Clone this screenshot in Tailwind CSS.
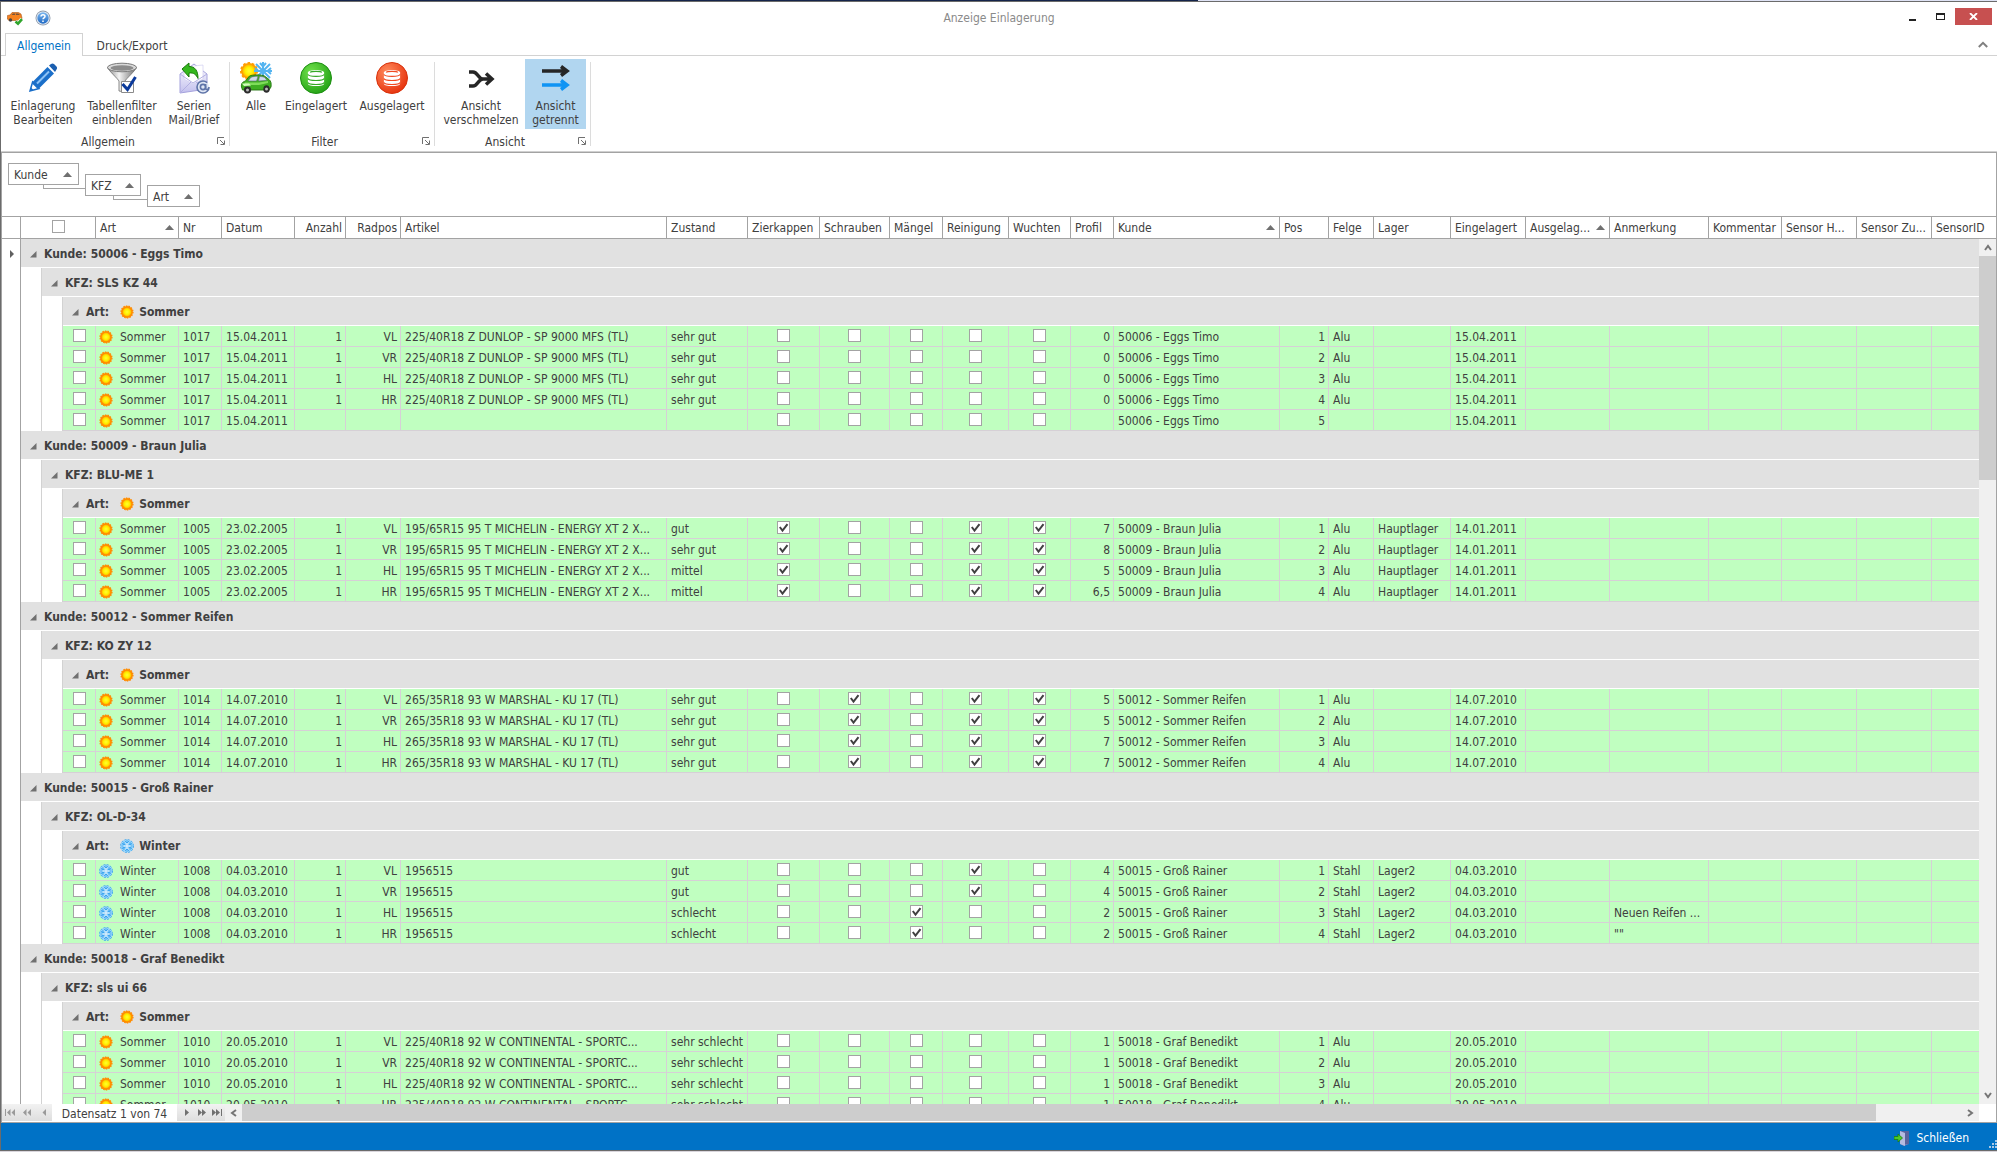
<!doctype html>
<html lang="de">
<head>
<meta charset="utf-8">
<title>Anzeige Einlagerung</title>
<script src="https://cdn.jsdelivr.net/npm/@tailwindcss/browser@4"></script>
</head>
<body class="h-screen overflow-hidden flex flex-col bg-white font-['DejaVu_Sans_Condensed','DejaVu_Sans',sans-serif] text-xs text-[#404040]">
<svg class="absolute w-0 h-0">
  <defs>
    <radialGradient id="g-sun"><stop offset="0" stop-color="#ffff30"/><stop offset=".6" stop-color="#ffee00"/><stop offset="1" stop-color="#ffb400"/></radialGradient>
    <radialGradient id="g-green" cx=".35" cy=".3" r=".8"><stop offset="0" stop-color="#6ee04a"/><stop offset="1" stop-color="#1f9e12"/></radialGradient>
    <radialGradient id="g-red" cx=".35" cy=".3" r=".8"><stop offset="0" stop-color="#ff8a5c"/><stop offset="1" stop-color="#e52d08"/></radialGradient>
    <linearGradient id="g-metal"><stop offset="0" stop-color="#8a8a8a"/><stop offset=".4" stop-color="#f4f4f4"/><stop offset="1" stop-color="#6c6c6c"/></linearGradient>
    <linearGradient id="g-mail" x2="0" y2="1"><stop offset="0" stop-color="#ffffff"/><stop offset="1" stop-color="#c3c0ee"/></linearGradient>
    <linearGradient id="g-help" x2="0" y2="1"><stop offset="0" stop-color="#7db8f0"/><stop offset="1" stop-color="#1f69c4"/></linearGradient>
  </defs>
  <symbol id="sun" viewBox="0 0 14 14">
    <circle cx="7" cy="7" r="5.900" fill="#ff8c00" stroke="#ff8c00" stroke-width="1.400" stroke-dasharray="1.500 1.100"/>
    <circle cx="7" cy="7" r="4.300" fill="url(#g-sun)"/>
  </symbol>
  <symbol id="snow" viewBox="0 0 14 14">
    <circle cx="7" cy="7" r="6.600" fill="#a5dbfb"/>
    <g stroke="#2b9cee" stroke-width=".8" fill="none">
      <circle cx="7" cy="7" r="6.500" stroke-dasharray="2 1.400"/>
      <path d="M7 1v12M1.800 4l10.400 6M1.800 10l10.400-6M5 2l2 2 2-2M5 12l2-2 2 2M1.600 6.300l2.600-.9-.4-2.700M12.400 7.700l-2.600.9.4 2.700M12.400 6.300l-2.600-.9.400-2.700M1.600 7.700l2.600.9-.4 2.700"/>
    </g>
    <path d="M7 4v6M4.500 7h5" stroke="#fff" stroke-width="1"/>
  </symbol>
  <symbol id="db" viewBox="0 0 20 20">
    <path d="M1 4c0-4 18-4 18 0v12c0 4-18 4-18 0z" fill="#fff"/>
    <g fill="none" stroke="currentColor" stroke-width="1.300"><path d="M3.500 3.800c1-1.600 12-1.600 13 0"/><path d="M1 6c1 3 17 3 18 0M1 10.500c1 3 17 3 18 0M1 15c1 3 17 3 18 0"/></g>
  </symbol>
  <symbol id="launch" viewBox="0 0 8 8"><path d="M.5 7V.5H7M3 3l4 4M7.500 3.500v4h-4" fill="none" stroke="#707070"/></symbol>
  <symbol id="asc" viewBox="0 0 9 5"><path d="M4.500 0L9 5H0z" fill="#707070"/></symbol>
</svg>

<div class="h-px shrink-0 bg-linear-to-r from-[#14244a] from-60% to-[#dfe3f5] to-60%"></div>
<div class="flex-1 min-h-0 flex flex-col border-t border-l border-b border-[#6b6b6b]">

  <header class="h-[31px] shrink-0 grid grid-cols-[1fr_auto_1fr] items-center">
    <div class="flex items-center gap-3 pl-1.5">
      <svg class="w-4 h-4" viewBox="0 0 16 16"><path d="M.5 5.500L3 5l2-2.500h6.500L14 4l1 4-1 2.500H2L.3 9z" fill="#f58220" stroke="#a8541a" stroke-width=".6"/><path d="M4.500 5L6 3.400h2.200V5zM9 3.400h2.300L13 5H9z" fill="#75553d"/><circle cx="3.500" cy="10" r="1.700" fill="#444"/><path d="M8.500 11.500l2.500 2.200 4-4.500" fill="none" stroke="#fff" stroke-width="4"/><path d="M8.500 11.500l2.500 2.200 4-4.500" fill="none" stroke="#2fa52b" stroke-width="2.600"/></svg>
      <svg class="w-4 h-4" viewBox="0 0 16 16"><circle cx="8" cy="8" r="7.500" fill="#8d9aab"/><circle cx="8" cy="8" r="6.600" fill="#e8eef6"/><circle cx="8" cy="8" r="5.700" fill="url(#g-help)"/><path d="M6 6.600c0-2.500 4-2.500 4-.2C10 7.800 8 7.800 8 9.300M8 10.500v1.500" fill="none" stroke="#fff" stroke-width="1.500"/></svg>
    </div>
    <h1 class="text-[#8a8a8a]">Anzeige Einlagerung</h1>
    <div class="flex items-center justify-end pr-[5px] -mt-0.5">
      <button aria-label="Minimieren" class="w-8 h-4 grid place-items-center"><svg class="w-[9px] h-[9px]" viewBox="0 0 9 9"><path d="M1 7h7v2H1z" fill="#222"/></svg></button>
      <button aria-label="Maximieren" class="w-6 h-4 grid place-items-center"><svg class="w-[9px] h-[9px]" viewBox="0 0 9 9"><path d="M0 1h9v7H0zM1 3v4h7V3z" fill="#222" fill-rule="evenodd"/></svg></button>
      <button aria-label="Fenster schließen" class="w-[37px] h-[17px] ml-[3px] bg-[#c75050] grid place-items-center"><svg class="w-[9px] h-[7px]" viewBox="0 0 9 7"><path d="M1 0l7 7M8 0L1 7" stroke="#fff" stroke-width="1.800"/></svg></button>
    </div>
  </header>

  <nav class="h-[23px] shrink-0 flex">
    <div class="w-1 border-b border-[#d2d2d2]"></div>
    <button class="w-[78px] pt-0.5 border border-b-0 border-[#d2d2d2] text-[#0072c6]">Allgemein</button>
    <button class="w-[98px] pt-0.5 border-b border-t border-t-transparent border-b-[#d2d2d2]">Druck/Export</button>
    <div class="flex-1 border-b border-[#d2d2d2] flex justify-end items-center pr-[9px]">
      <button aria-label="Menüband minimieren"><svg class="w-[10px] h-[7px]" viewBox="0 0 10 7"><path d="M.8 6L5 1.800 9.200 6" fill="none" stroke="#808080" stroke-width="2"/></svg></button>
    </div>
  </nav>

  <div class="h-24 shrink-0 flex border-b border-[#d0d0d0] leading-[14px] pt-[3px]">
    <section class="w-[228px] pl-1 relative">
      <div class="flex h-[71px]">
        <button class="w-[76px] flex flex-col items-center pt-[3px] gap-[5px]"><svg class="w-8 h-8" viewBox="0 0 32 32"><path d="M3 29l2.600-9L20.500 5l6.500 6.500L12 26.500z" fill="#1b6fc9"/><path d="M3 29l2.200-7.500 5.300 5.200z" fill="#fff"/><path d="M3 29l2.600-9 6.400 6.500z" fill="none" stroke="#1b6fc9" stroke-width="1.500"/><path d="M3 29l1-3.500 2.500 2.600z" fill="#1b6fc9"/><path d="M10 21.500L22 9.500" stroke="#8cc2f5" stroke-width="2"/><path d="M22 3.500l2-1.500c1-.8 2-.8 3 0l2.500 2.500c.8 1 .8 2 0 3L28 10z" fill="#1b5fb0"/></svg><span>Einlagerung<br>Bearbeiten</span></button>
        <button class="w-[82px] flex flex-col items-center pt-[3px] gap-[5px]"><svg class="w-8 h-8" viewBox="0 0 32 32"><path d="M1.500 5.500C3 9 12 17 13 19v10l6 1V19c1-2 10-10 11.500-13.500z" fill="url(#g-metal)" stroke="#6c6c6c" stroke-width=".8"/><ellipse cx="16" cy="5.500" rx="14.500" ry="4.300" fill="#d9d9d9" stroke="#7a7a7a"/><ellipse cx="16" cy="6" rx="11.500" ry="2.800" fill="#8c8c8c"/><path d="M15.500 19.500h12v11h-12z" fill="#fff" stroke="#8a8a8a"/><path d="M16.500 22l5 5.500L29.500 15" fill="none" stroke="#0b3a9b" stroke-width="3"/></svg><span>Tabellenfilter<br>einblenden</span></button>
        <button class="w-[62px] flex flex-col items-center pt-[3px] gap-[5px]"><svg class="w-8 h-8" viewBox="0 0 32 32"><path d="M2 12L16 2l13 10v15L2 31z" fill="url(#g-mail)" stroke="#a5a2dc"/><path d="M6 5l19-2v14l-10 5-9-5z" fill="#fff" stroke="#c9c7ee" stroke-width=".6"/><path d="M2 12l13 9 14-9M2 31l11-11M29 27L18 20" fill="none" stroke="#b2afe2"/><path d="M4 7l7-6v3.500c6 0 9 4 9 12-2-4-4-6-9-5.500V15z" fill="#35b81e" stroke="#1b7a0c"/><g fill="none" stroke="#5f74a8" stroke-width="1.600"><circle cx="25" cy="25" r="6" fill="#dfe6f4" stroke-dasharray="32 6"/><circle cx="25" cy="25" r="2.600"/><path d="M27.600 22v4.500c.5 1.500 3 1.200 3-.8"/></g></svg><span>Serien<br>Mail/Brief</span></button>
      </div>
      <div class="h-5 grid place-items-center pr-[18px] pt-[3px]">Allgemein</div>
      <svg class="absolute w-2 h-2 right-1 bottom-[6px]"><use href="#launch"/></svg>
    </section>
    <div class="w-px h-[84px] mt-[3px] bg-[#dcdcdc]"></div>
    <section class="w-[204px] pl-[7px] relative">
      <div class="flex h-[71px]">
        <button class="w-[38px] flex flex-col items-center pt-[3px] gap-[5px]"><svg class="w-8 h-8" viewBox="0 0 32 32"><circle cx="9" cy="9" r="8" fill="#ff9d00" stroke="#ff9d00" stroke-width="2" stroke-dasharray="2.500 2"/><circle cx="9" cy="9" r="6.500" fill="url(#g-sun)"/><g stroke="#54b4f0" stroke-width="2" fill="none"><path d="M23 0v18M14 9h18M16 2l14 14M30 2L16 16M20 1l3 3.500L26 1M31 6l-3.500 3 3.500 3M15 6l3.500 3"/></g><path d="M1.500 25c-.5-3 .5-5 4-6l4-5c3-1.500 12-1.500 15 0l4.500 3.500c2 1.500 2.500 4 2 7.500L29 28H2.500z" fill="#3fae22" stroke="#23720f" stroke-width=".9"/><path d="M8 19l3-3.800c2-.8 5-.9 7-.8l-1.500 4.600zM19.500 14.500c2 0 3.500.2 5 .8l2.500 3-8.500.8z" fill="#cfd9ea" stroke="#5c6b74" stroke-width=".6"/><path d="M5 20.500h14l9-1.500v2l-9 2H4z" fill="#7fdc5a"/><path d="M2 21.500h7l2 2-7 .5z" fill="#d2fabc"/><ellipse cx="7.500" cy="28" rx="3.600" ry="3.400" fill="#2b2b2b"/><ellipse cx="26.500" cy="27" rx="3.200" ry="3.800" fill="#2b2b2b"/><circle cx="7.500" cy="28" r="1.500" fill="#bbb"/><circle cx="26.500" cy="27" r="1.500" fill="#bbb"/></svg><span>Alle</span></button>
        <button class="w-[82px] flex flex-col items-center pt-[3px] gap-[5px]"><svg class="w-8 h-8 text-[#35a826]" viewBox="0 0 32 32"><circle cx="16" cy="16" r="15.500" fill="url(#g-green)" stroke="#1d8f12"/><use href="#db" x="6" y="7" width="20" height="18"/></svg><span>Eingelagert</span></button>
        <button class="w-[70px] flex flex-col items-center pt-[3px] gap-[5px]"><svg class="w-8 h-8 text-[#f04a22]" viewBox="0 0 32 32"><circle cx="16" cy="16" r="15.500" fill="url(#g-red)" stroke="#d8320c"/><use href="#db" x="6" y="7" width="20" height="18"/></svg><span>Ausgelagert</span></button>
      </div>
      <div class="h-5 grid place-items-center pr-[22px] pt-[3px]">Filter</div>
      <svg class="absolute w-2 h-2 right-1 bottom-[6px]"><use href="#launch"/></svg>
    </section>
    <div class="w-px h-[84px] mt-[3px] bg-[#dcdcdc]"></div>
    <section class="w-[155px] pl-[3px] relative">
      <div class="flex h-[71px] gap-px">
        <button class="w-[86px] flex flex-col items-center pt-[3px] gap-[5px]"><svg class="w-8 h-8" viewBox="0 0 32 32"><path d="M4 10h4c5 0 5 7 10 7h9M4 24h4c5 0 5-7 10-7M21 11.500l6 5.500-6 5.500" fill="none" stroke="#262626" stroke-width="3.500"/></svg><span>Ansicht<br>verschmelzen</span></button>
        <button class="w-[61px] h-[70px] bg-[#b1d6f0] flex flex-col items-center pt-[3px] gap-[5px]"><svg class="w-8 h-8" viewBox="0 0 32 32"><path d="M2 9h25M21 4.500L27 9l-6 4.500" fill="none" stroke="#262626" stroke-width="3.500"/><path d="M2 23h25M21 18.500l6 4.500-6 4.500" fill="none" stroke="#0f94f4" stroke-width="3.500"/></svg><span>Ansicht<br>getrennt</span></button>
      </div>
      <div class="h-5 grid place-items-center pr-[18px] pt-[3px]">Ansicht</div>
      <svg class="absolute w-2 h-2 right-1 bottom-[6px]"><use href="#launch"/></svg>
    </section>
    <div class="w-px h-[84px] mt-[3px] bg-[#dcdcdc]"></div>
  </div>

  <main class="flex-1 min-h-0 flex flex-col border border-[#a3a3a3]">
    <div class="h-[63px] shrink-0 flex items-start gap-1.5 pl-1.5 pt-2.5">
      <button class="relative w-[71px] h-[22px] border border-[#a3a3a3] flex items-center justify-between px-[5px] pr-1.5 pt-px">Kunde<svg class="w-[9px] h-[5px]"><use href="#asc"/></svg><i class="absolute left-[34px] top-[21px] w-[42px] h-1 border-l border-b border-[#a3a3a3]"></i></button>
      <button class="relative w-[56px] h-[22px] mt-[11px] border border-[#a3a3a3] flex items-center justify-between px-[5px] pr-1.5 pt-px">KFZ<svg class="w-[9px] h-[5px]"><use href="#asc"/></svg><i class="absolute left-[27px] top-[21px] w-[34px] h-1 border-l border-b border-[#a3a3a3]"></i></button>
      <button class="w-[53px] h-[22px] mt-[22px] border border-[#a3a3a3] flex items-center justify-between px-[5px] pr-1.5 pt-px">Art<svg class="w-[9px] h-[5px]"><use href="#asc"/></svg></button>
    </div>

    <div class="relative flex-1 min-h-0 overflow-hidden border-t border-[#a3a3a3]">
      <table class="w-full table-fixed border-separate border-spacing-0 whitespace-nowrap">
        <colgroup id="cols"></colgroup>
        <thead><tr id="head"></tr></thead>
        <tbody id="rows"></tbody>
      </table>
      <div class="absolute right-0 top-[22px] bottom-0 w-[17px] bg-[#f0f0f0] flex flex-col">
        <button aria-label="Nach oben" class="h-[17px] shrink-0 grid place-items-center"><svg class="w-2 h-[7px]" viewBox="0 0 8 7"><path d="M1 6l3-4 3 4" fill="none" stroke="#757575" stroke-width="2"/></svg></button>
        <div class="flex-1"><div class="h-[27%] bg-[#cdcdcd]"></div></div>
        <button aria-label="Nach unten" class="h-[17px] shrink-0 grid place-items-center"><svg class="w-2 h-[7px]" viewBox="0 0 8 7"><path d="M1 1l3 4 3-4" fill="none" stroke="#757575" stroke-width="2"/></svg></button>
      </div>
    </div>

    <div class="h-[18px] shrink-0 flex border-b border-white pr-[17px]">
      <div class="w-[50px] bg-linear-to-b from-[#f2f2f2] to-[#dedede] flex items-center justify-around">
        <button aria-label="Erster Datensatz"><svg class="w-[10px] h-[7px]" viewBox="0 0 10 7"><path d="M0 0h1v7H0zM5.500 0v7L2 3.500zM10 0v7L6.500 3.500z" fill="#9a9a9a"/></svg></button>
        <button aria-label="Seite zurück"><svg class="w-[10px] h-[7px]" viewBox="0 0 10 7"><path d="M4.500 0v7L1 3.500zM9 0v7L5.500 3.500z" fill="#9a9a9a"/></svg></button>
        <button aria-label="Zurück"><svg class="w-[10px] h-[7px]" viewBox="0 0 10 7"><path d="M7 0v7L3.500 3.500z" fill="#9a9a9a"/></svg></button>
      </div>
      <div class="w-[125px] grid place-items-center pt-0.5">Datensatz 1 von 74</div>
      <div class="w-12 pl-0.5 bg-linear-to-b from-[#f2f2f2] to-[#dedede] flex items-center justify-around">
        <button aria-label="Weiter"><svg class="w-[10px] h-[7px]" viewBox="0 0 10 7"><path d="M3 0v7l4-3.500z" fill="#707070"/></svg></button>
        <button aria-label="Seite vor"><svg class="w-[10px] h-[7px]" viewBox="0 0 10 7"><path d="M1 0v7l4-3.500zM5 0v7l4-3.500z" fill="#707070"/></svg></button>
        <button aria-label="Letzter Datensatz"><svg class="w-[10px] h-[7px]" viewBox="0 0 10 7"><path d="M0 0v7l4-3.500zM4 0v7l4-3.500zM9 0h1v7H9z" fill="#707070"/></svg></button>
      </div>
      <div class="flex-1 flex bg-[#f0f0f0]">
        <button aria-label="Nach links" class="w-[17px] grid place-items-center"><svg class="w-[7px] h-2" viewBox="0 0 7 8"><path d="M6 1L2 4l4 3" fill="none" stroke="#757575" stroke-width="2"/></svg></button>
        <div class="flex-1"><div class="w-[95%] h-full bg-[#cdcdcd]"></div></div>
        <button aria-label="Nach rechts" class="w-[17px] grid place-items-center"><svg class="w-[7px] h-2" viewBox="0 0 7 8"><path d="M1 1l4 3-4 3" fill="none" stroke="#757575" stroke-width="2"/></svg></button>
      </div>
    </div>
  </main>

  <footer class="relative h-[27px] shrink-0 bg-[#0072c6] flex items-center justify-end pr-7 pt-0.5 text-white">
    <button class="flex items-center gap-1.5"><svg class="w-4 h-4" viewBox="0 0 16 16"><path d="M6 1h9v13l-5 2-4-2z" fill="#6f79b4"/><path d="M7 1h8v13H7z" fill="#59639c"/><path d="M6 1l5 2v13l-5-2z" fill="#b4bbe0"/><path d="M0 6.500h4V4l4.500 4L4 12V9.500H0z" fill="#4cc928" stroke="#1d7f0c" stroke-width=".8"/></svg>Schließen</button>
    <svg class="absolute right-0 bottom-0.5 w-2 h-2" viewBox="0 0 8 8"><path d="M6 0h2v2H6zM3 3h2v2H3zM6 3h2v2H6zM0 6h2v2H0zM3 6h2v2H3zM6 6h2v2H6z" fill="#a9c9e6"/></svg>
  </footer>
</div>
<div class="h-px shrink-0 bg-[#d9d6dc]"></div>

<script>
const widths = [19,21,21,33,83,43,73,51,55,266,81,72,70,53,66,62,43,166,49,45,77,75,84,99,73,75,75,0];
document.getElementById('cols').innerHTML = widths.map(w => w ? `<col style="width:${w}px">` : '<col>').join('');

const asc = '<svg class="w-[9px] h-[5px] shrink-0"><use href="#asc"/></svg>';
const box = (on, label) => `<span class="inline-grid align-top"><input type="checkbox" aria-label="${label}" class="peer col-start-1 row-start-1 appearance-none w-[13px] h-[13px] bg-white border border-[#a3a3a3]"${on ? ' checked' : ''}><svg class="hidden peer-checked:block col-start-1 row-start-1 w-[13px] h-[13px] pointer-events-none" viewBox="0 0 13 13"><path d="M2.800 6l2.700 3.600L10.500 3.200" fill="none" stroke="#404040" stroke-width="2"/></svg></span>`;
const icon = art => art === 'Winter' ? '<svg class="w-[14px] h-[14px] shrink-0"><use href="#snow"/></svg>' : '<svg class="w-[14px] h-[14px] shrink-0"><use href="#sun"/></svg>';

const align = { left: 'text-left px-1', right: 'text-right pl-1 pr-[3px]', center: 'text-center px-1' };
const th = 'h-[22px] py-0 font-normal border-b border-r border-[#a3a3a3] overflow-hidden';
const heads = ['Art^','Nr','Datum','Anzahl>','Radpos>','Artikel','Zustand','Zierkappen','Schrauben','Mängel','Reinigung','Wuchten','Profil','Kunde^','Pos','Felge','Lager','Eingelagert','Ausgelag...^','Anmerkung','Kommentar','Sensor H...','Sensor Zu...','SensorID'];
document.getElementById('head').innerHTML =
  `<th class="${th} px-1"></th><th colspan="3" class="${th} ${align.center}">${box(false, 'Alle auswählen')}</th>` +
  heads.map((h, i) => {
    const name = h.replace(/[\^>]$/, '');
    const last = i === heads.length - 1 ? 'border-r-0' : '';
    if (h.endsWith('^')) return `<th class="${th} px-1"><div class="flex items-center justify-between">${name}${asc}</div></th>`;
    return `<th class="${th} ${last} ${h.endsWith('>') ? align.right : align.left}">${name}</th>`;
  }).join('');

// Flags per row, in order: Zierkappen, Schrauben, Mängel, Reinigung, Wuchten
const groups = [
  { k: '50006 - Eggs Timo', kfz: 'SLS KZ 44', art: 'Sommer', nr: '1017', dat: '15.04.2011', ein: '15.04.2011', lager: '', felge: 'Alu', artikel: '225/40R18 Z DUNLOP - SP 9000 MFS (TL)',
    rows: [['VL','sehr gut','00000','0'],['VR','sehr gut','00000','0'],['HL','sehr gut','00000','0'],['HR','sehr gut','00000','0'],['','','00000','']] },
  { k: '50009 - Braun Julia', kfz: 'BLU-ME 1', art: 'Sommer', nr: '1005', dat: '23.02.2005', ein: '14.01.2011', lager: 'Hauptlager', felge: 'Alu', artikel: '195/65R15 95 T MICHELIN - ENERGY XT 2 X...',
    rows: [['VL','gut','10011','7'],['VR','sehr gut','10011','8'],['HL','mittel','10011','5'],['HR','mittel','10011','6,5']] },
  { k: '50012 - Sommer Reifen', kfz: 'KO ZY 12', art: 'Sommer', nr: '1014', dat: '14.07.2010', ein: '14.07.2010', lager: '', felge: 'Alu', artikel: '265/35R18 93 W MARSHAL - KU 17 (TL)',
    rows: [['VL','sehr gut','01011','5'],['VR','sehr gut','01011','5'],['HL','sehr gut','01011','7'],['HR','sehr gut','01011','7']] },
  { k: '50015 - Groß Rainer', kfz: 'OL-D-34', art: 'Winter', nr: '1008', dat: '04.03.2010', ein: '04.03.2010', lager: 'Lager2', felge: 'Stahl', artikel: '1956515',
    rows: [['VL','gut','00010','4'],['VR','gut','00010','4'],['HL','schlecht','00100','2','Neuen Reifen ...'],['HR','schlecht','00100','2','""']] },
  { k: '50018 - Graf Benedikt', kfz: 'sls ui 66', art: 'Sommer', nr: '1010', dat: '20.05.2010', ein: '20.05.2010', lager: '', felge: 'Alu', artikel: '225/40R18 92 W CONTINENTAL - SPORTC...',
    rows: [['VL','sehr schlecht','00000','1'],['VR','sehr schlecht','00000','1'],['HL','sehr schlecht','00000','1'],['HR','sehr schlecht','00000','1']] }
];

const tri = '<svg class="w-[7px] h-[7px] shrink-0" viewBox="0 0 7 7"><path d="M6.500 0v6.500H0z" fill="#707070"/></svg>';
const mark = first => `<td class="p-0 border-r border-[#a3a3a3]">${first ? '<svg class="w-1 h-2 ml-2" viewBox="0 0 4 8"><path d="M0 0l4 4-4 4z" fill="#606060"/></svg>' : ''}</td>`;
const indent = '<td class="p-0 border-r border-[#d2d2d2]"></td>';
const groupRow = (level, html, first) => `<tr>${mark(first)}${indent.repeat(level)}<td colspan="${27 - level}" class="h-[29px] p-0 pl-[9px] pt-0.5 bg-[#e1e1e1] border-b border-white font-bold"><div class="flex items-center gap-[7px]">${tri}${html}</div></td></tr>`;
const base = 'h-[21px] pt-0.5 pb-0 bg-[#c0ffc0] border-b border-r border-[#d6d0d6] leading-4 overflow-hidden';
const L = t => `<td class="${base} ${align.left}">${t}</td>`;
const R = t => `<td class="${base} ${align.right}">${t}</td>`;
const C = t => `<td class="${base} ${align.center}">${t}</td>`;
const checks = ['Zierkappen','Schrauben','Mängel','Reinigung','Wuchten'];

document.getElementById('rows').innerHTML = groups.map((g, gi) =>
  groupRow(0, 'Kunde: ' + g.k, gi === 0) +
  groupRow(1, 'KFZ: ' + g.kfz) +
  groupRow(2, `<span class="flex items-center">Art:<span class="ml-[11px] mr-[5px]">${icon(g.art)}</span>${g.art}</span>`) +
  g.rows.map((r, i) => {
    const full = r[0] !== '';
    return `<tr>${mark()}${indent}${indent}` + C(box(false, 'Auswählen')) +
      `<td class="${base} px-[3px]"><div class="flex items-center gap-[7px]">${icon(g.art)}${g.art}</div></td>` +
      L(g.nr) + L(g.dat) + R(full ? '1' : '') + R(r[0]) + L(full ? g.artikel : '') + L(r[1]) +
      [...r[2]].map((c, n) => C(box(c === '1', checks[n]))).join('') +
      R(r[3]) + L(g.k) + R(i + 1) + L(full ? g.felge : '') + L(g.lager) + L(g.ein) +
      L('') + L(r[4] || '') + L('') + L('') + L('') + L('') + '</tr>';
  }).join('')
).join('');
</script>
</body>
</html>
